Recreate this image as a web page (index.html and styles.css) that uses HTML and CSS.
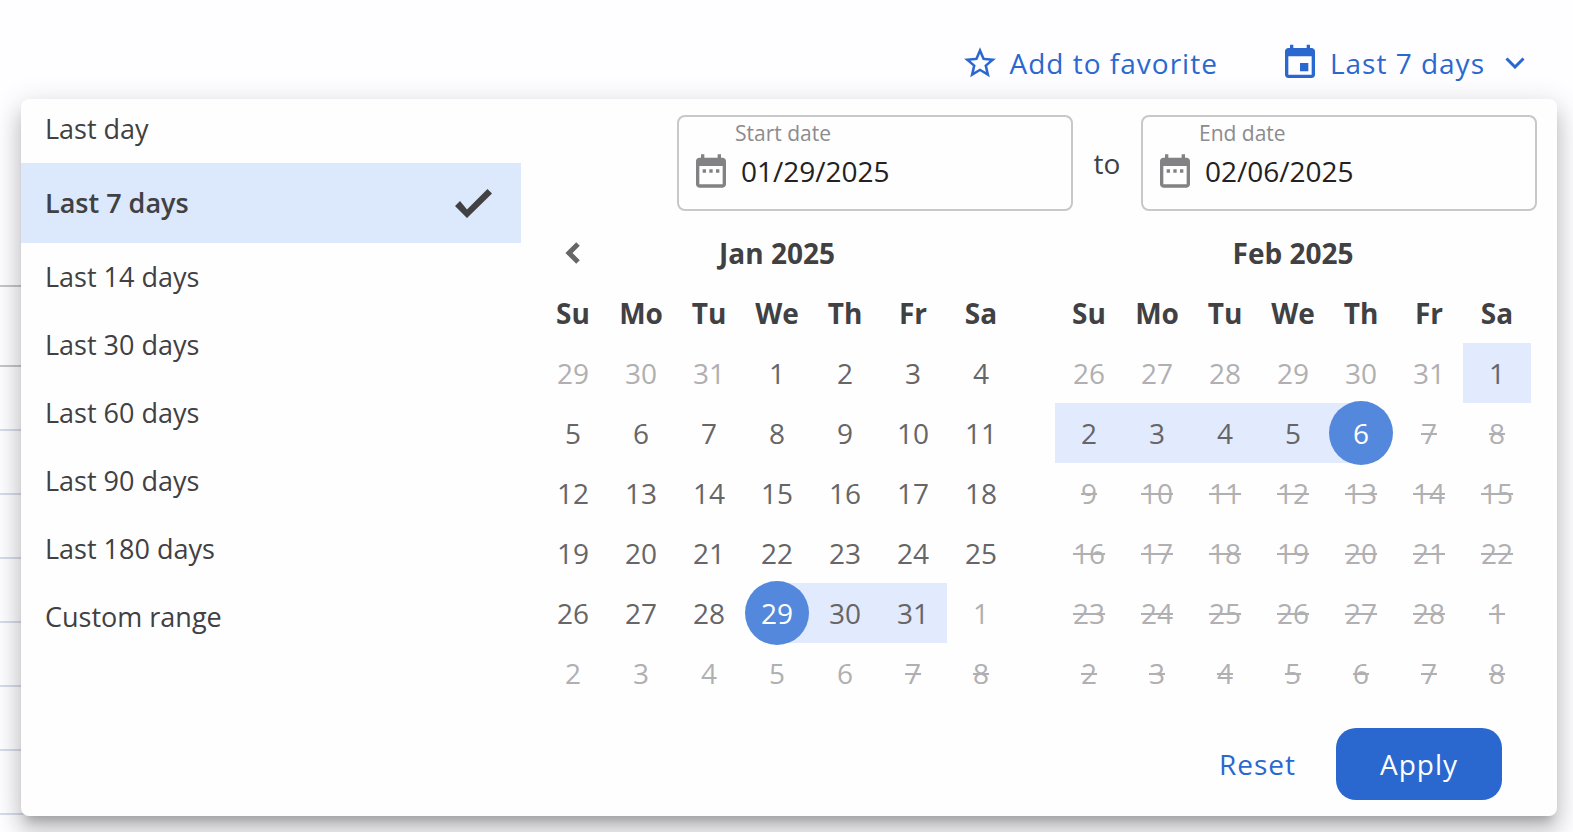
FILE: index.html
```
<!DOCTYPE html>
<html lang="en">
<head>
  <meta charset="UTF-8">
  <title>Date range</title>
  <meta name="viewport" content="width=device-width, initial-scale=1">
  <link rel="stylesheet" href="styles.css">
</head>
<body>

  <header class="toolbar">
    <button class="link-btn favorite" type="button">
      <svg class="star" viewBox="0 0 24 24"><path d="M22 9.24l-7.19-.62L12 2 9.19 8.63 2 9.24l5.46 4.73L5.82 21 12 17.27 18.18 21l-1.63-7.03L22 9.24zM12 15.4l-3.76 2.27 1-4.28-3.32-2.88 4.38-.38L12 6.1l1.71 4.04 4.38.38-3.32 2.88 1 4.28L12 15.4z"/></svg>
      <span>Add to favorite</span>
    </button>
    <button class="link-btn period" type="button" aria-expanded="true">
      <svg class="event" viewBox="0 0 24 24"><path d="M17 12h-5v5h5v-5zM16 1v2H8V1H6v2H5c-1.11 0-1.99.9-1.99 2L3 19c0 1.1.89 2 2 2h14c1.1 0 2-.9 2-2V5c0-1.1-.9-2-2-2h-1V1h-2zm3 18H5V8h14v11z"/></svg>
      <span>Last 7 days</span>
      <svg class="caret" viewBox="0 0 20 12"><path d="M1.5 1.5L10 10l8.500-8.500"/></svg>
    </button>
  </header>

  <main class="content">
    <!-- rows of the list behind the popup -->
    <div class="rows">
      <div class="row row-head"></div>
      <div class="row row-filter"></div>
      <div class="row"></div>
      <div class="row"></div>
      <div class="row"></div>
      <div class="row"></div>
      <div class="row"></div>
      <div class="row"></div>
      <div class="row"></div>
    </div>

    <section class="popup">
      <nav class="presets">
        <button type="button">Last day</button>
        <button type="button" class="active">
          Last 7 days
          <svg class="check" viewBox="0 0 40 40"><path d="M2 23l5-5 7 8.500L34.500 6 39 10.500 14 35z"/></svg>
        </button>
        <button type="button">Last 14 days</button>
        <button type="button">Last 30 days</button>
        <button type="button">Last 60 days</button>
        <button type="button">Last 90 days</button>
        <button type="button">Last 180 days</button>
        <button type="button">Custom range</button>
      </nav>

      <div class="picker">
        <div class="fields">
          <div class="field">
            <svg class="date-icon" viewBox="0 0 24 24"><path d="M9 11H7v2h2v-2zm4 0h-2v2h2v-2zm4 0h-2v2h2v-2zm2-7h-1V2h-2v2H8V2H6v2H5c-1.110 0-1.990.9-1.990 2L3 20c0 1.100.89 2 2 2h14c1.100 0 2-.9 2-2V6c0-1.100-.9-2-2-2zm0 16H5V9h14v11z"/></svg>
            <div class="field-text">
              <label for="startDate">Start date</label>
              <input type="text" id="startDate" value="01/29/2025">
            </div>
          </div>
          <span class="to">to</span>
          <div class="field">
            <svg class="date-icon" viewBox="0 0 24 24"><path d="M9 11H7v2h2v-2zm4 0h-2v2h2v-2zm4 0h-2v2h2v-2zm2-7h-1V2h-2v2H8V2H6v2H5c-1.110 0-1.990.9-1.990 2L3 20c0 1.100.89 2 2 2h14c1.100 0 2-.9 2-2V6c0-1.100-.9-2-2-2zm0 16H5V9h14v11z"/></svg>
            <div class="field-text">
              <label for="endDate">End date</label>
              <input type="text" id="endDate" value="02/06/2025">
            </div>
          </div>
        </div>

        <div class="months">
          <div class="month">
            <div class="month-head">
              <button class="prev" type="button" aria-label="Previous month">
                <svg viewBox="0 0 16 22"><path d="M13 2L4 11l9 9"/></svg>
              </button>
              <h2>Jan 2025</h2>
            </div>
            <table id="jan"></table>
          </div>
          <div class="month">
            <div class="month-head">
              <h2>Feb 2025</h2>
            </div>
            <table id="feb"></table>
          </div>
        </div>

        <div class="actions">
          <button class="reset" type="button">Reset</button>
          <button class="apply" type="button">Apply</button>
        </div>
      </div>
    </section>
  </main>

  <script>
    const start = new Date(2025, 0, 29).getTime();
    const end = new Date(2025, 1, 6).getTime();
    const weekDays = ['Su', 'Mo', 'Tu', 'We', 'Th', 'Fr', 'Sa'];

    function dayClass(date, month) {
      const time = date.getTime();
      const classes = [];
      if (date.getMonth() !== month) {
        classes.push('off');
      } else if (time === start) {
        classes.push('start');
      } else if (time === end) {
        classes.push('end');
      } else if (time > start && time < end) {
        classes.push('in-range');
      }
      if (time > end) classes.push('disabled');
      return classes.join(' ');
    }

    function renderMonth(id, year, month) {
      const offset = new Date(year, month, 1).getDay();
      let html = '<thead><tr>' + weekDays.map(d => `<th>${d}</th>`).join('') + '</tr></thead><tbody>';
      for (let week = 0; week < 6; week++) {
        html += '<tr>';
        for (let day = 0; day < 7; day++) {
          const date = new Date(year, month, 1 - offset + week * 7 + day);
          const cls = dayClass(date, month);
          const disabled = cls.includes('disabled') ? ' disabled' : '';
          html += `<td class="${cls}"><button type="button"${disabled}>${date.getDate()}</button></td>`;
        }
        html += '</tr>';
      }
      document.getElementById(id).innerHTML = html + '</tbody>';
    }

    renderMonth('jan', 2025, 0);
    renderMonth('feb', 2025, 1);
  </script>

</body>
</html>
```
FILE: styles.css
```
* {
  box-sizing: border-box;
}

body {
  font-family: "Open Sans", "Noto Sans", sans-serif;
  font-size: 28px;
  line-height: 40px;
  color: #414042;
  background: #fefdff;
  margin: 0;
  min-height: 100vh;
  overflow: hidden;
}

button, input {
  font: inherit;
  color: inherit;
  background: none;
  border: 0;
  padding: 0;
  margin: 0;
}

button {
  cursor: pointer;
}

.toolbar {
  display: flex;
  justify-content: flex-end;
  gap: 62px;
  height: 99px;
  padding: 41px 48px 0 0;
}

.link-btn {
  display: flex;
  align-items: center;
  height: 44px;
  color: #2a68d0;
  letter-spacing: 1px;
}

.link-btn svg {
  fill: #2a68d0;
  flex: none;
}

.star {
  width: 38px;
  height: 38px;
  margin-right: 11px;
}

.event {
  width: 40px;
  height: 40px;
  margin-right: 10px;
}

.link-btn .caret {
  width: 20px;
  height: 12px;
  margin-left: 20px;
  fill: none;
  stroke: #2a68d0;
  stroke-width: 3;
}

.content {
  position: relative;
}

.rows {
  margin-right: 40px;
}

.row {
  height: 64px;
  border-bottom: 2px solid #d6dcea;
}

.row-head {
  height: 188px;
  border-color: #c6c5c8;
}

.row-filter {
  height: 80px;
  border-color: #c6c5c8;
}

.popup {
  position: absolute;
  top: 0;
  left: 21px;
  right: 16px;
  display: grid;
  grid-template-columns: 500px 1fr;
  background: #fefefe;
  border-radius: 8px;
  box-shadow: 0 10px 10px -6px rgba(0, 0, 0, 0.2),
    0 16px 20px 2px rgba(0, 0, 0, 0.14),
    0 6px 28px 4px rgba(0, 0, 0, 0.12);
}

.presets button {
  display: flex;
  align-items: center;
  justify-content: space-between;
  width: 100%;
  height: 68px;
  padding: 0 28px 0 24px;
  font-size: 27px;
  text-align: left;
}

.presets button:first-child {
  height: 64px;
  padding-bottom: 4px;
}

.presets .active {
  height: 80px;
  font-weight: 600;
  background: #dce8fc;
}

.check {
  width: 40px;
  height: 40px;
  fill: #414042;
}

.picker {
  padding: 16px 0;
}

.fields {
  display: flex;
  justify-content: flex-end;
  padding-right: 20px;
}

.field {
  display: flex;
  width: 396px;
  height: 96px;
  padding: 0 12px;
  border: 2px solid #c8c7c9;
  border-radius: 8px;
}

.date-icon {
  width: 40px;
  height: 40px;
  margin: 34px 10px 0 0;
  fill: #828183;
  flex: none;
}

.field-text {
  flex: 1;
  min-width: 0;
}

.field label {
  display: block;
  font-size: 21px;
  line-height: 32px;
  margin: 0 0 2px -6px;
  color: #8c8b8d;
}

.field input {
  display: block;
  width: 100%;
  height: 40px;
  color: #222123;
}

.to {
  width: 68px;
  line-height: 96px;
  text-align: center;
}

.months {
  display: flex;
  gap: 40px;
  margin-top: 12px;
  padding: 0 26px 0 18px;
}

.month {
  flex: 1;
}

.month-head {
  display: grid;
  grid-template-columns: 1fr 5fr 1fr;
  align-items: center;
  height: 60px;
}

.month-head h2 {
  grid-column: 2;
  margin: 0;
  font-size: 28px;
  font-weight: 700;
  text-align: center;
}

.prev svg {
  display: block;
  width: 16px;
  height: 22px;
  margin: 0 auto;
  fill: none;
  stroke: #666567;
  stroke-width: 5;
}

table {
  width: 100%;
  table-layout: fixed;
  border-collapse: collapse;
}

th, td {
  height: 60px;
  padding: 0;
  text-align: center;
}

td button {
  display: block;
  width: 64px;
  height: 64px;
  margin: -2px auto;
  border-radius: 50%;
  color: #666567;
}

.off button, .disabled button {
  color: #b0afb1;
}

.disabled button {
  text-decoration: line-through;
}

.in-range {
  background: #e2ebfd;
}

.start {
  background: linear-gradient(to right, transparent 50%, #e2ebfd 50%);
}

.end {
  background: linear-gradient(to left, transparent 50%, #e2ebfd 50%);
}

.start button, .end button {
  color: #fff;
  background: #5488dc;
}

.actions {
  display: flex;
  justify-content: flex-end;
  gap: 40px;
  margin-top: 25px;
  padding-right: 55px;
}

.reset, .apply {
  letter-spacing: 1px;
}

.reset {
  color: #2a68d0;
}

.apply {
  width: 166px;
  height: 72px;
  border-radius: 20px;
  color: #fefefe;
  background: #2a68d0;
}
```
